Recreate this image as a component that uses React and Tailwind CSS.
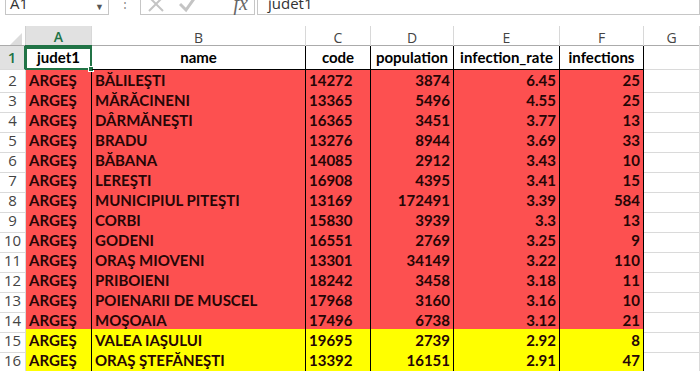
import React from 'react';

const COLS = ['A', 'B', 'C', 'D', 'E', 'F', 'G'];

const ROWS = [
  ['BĂLILEŞTI', '14272', '3874', '6.45', '25', 'red'],
  ['MĂRĂCINENI', '13365', '5496', '4.55', '25', 'red'],
  ['DÂRMĂNEŞTI', '16365', '3451', '3.77', '13', 'red'],
  ['BRADU', '13276', '8944', '3.69', '33', 'red'],
  ['BĂBANA', '14085', '2912', '3.43', '10', 'red'],
  ['LEREŞTI', '16908', '4395', '3.41', '15', 'red'],
  ['MUNICIPIUL PITEŞTI', '13169', '172491', '3.39', '584', 'red'],
  ['CORBI', '15830', '3939', '3.3', '13', 'red'],
  ['GODENI', '16551', '2769', '3.25', '9', 'red'],
  ['ORAŞ MIOVENI', '13301', '34149', '3.22', '110', 'red'],
  ['PRIBOIENI', '18242', '3458', '3.18', '11', 'red'],
  ['POIENARII DE MUSCEL', '17968', '3160', '3.16', '10', 'red'],
  ['MOŞOAIA', '17496', '6738', '3.12', '21', 'red'],
  ['VALEA IAŞULUI', '19695', '2739', '2.92', '8', 'yellow'],
  ['ORAŞ ŞTEFĂNEŞTI', '13392', '16151', '2.91', '47', 'yellow'],
];

const GRID = 'grid grid-cols-[26px_66px_214px_65px_83px_106px_84px_56px]';
const UI_FONT = { fontFamily: '"Open Sans", "Noto Sans", sans-serif' };
const CELL_FONT = { fontFamily: 'Lato, "Liberation Sans", sans-serif' };

function FormulaBar() {
  return (
    <div className="h-[26px] overflow-hidden">
      <div className="flex items-start h-[24px] -mt-[9px]" style={UI_FONT}>
        <div className="ml-[5px] w-[104px] h-[24px] border border-[#c6c6c6] flex items-center justify-between px-[4px] text-[15px] text-[#333]">
          <span>A1</span>
          <span className="text-[9px] text-[#555] mt-[8px]">▼</span>
        </div>
        <div className="w-[31px] h-[24px] flex items-center justify-center text-[#888] text-[12px]">⋮</div>
        <div className="w-[115px] h-[24px] border border-[#c6c6c6] flex items-center px-[6px] gap-[14px]">
          <svg width="18" height="18" viewBox="0 0 18 18" className="mt-[2px]">
            <path d="M2 2 L16 16 M16 2 L2 16" stroke="#c4c4c4" strokeWidth="2" fill="none" />
          </svg>
          <svg width="18" height="18" viewBox="0 0 18 18" className="mt-[2px]">
            <path d="M1 9 L7 15 L17 1" stroke="#c4c4c4" strokeWidth="3" fill="none" />
          </svg>
          <span className="ml-auto text-[20px] italic text-[#666]" style={{ fontFamily: '"Liberation Serif", serif' }}>fx</span>
        </div>
        <div className="flex-1 ml-[2px] h-[24px] border border-[#c6c6c6] flex items-center px-[10px] text-[15px] text-[#333]">
          judet1
        </div>
      </div>
    </div>
  );
}

function ColumnHeaders() {
  return (
    <div className={`${GRID} h-[20px] border-b border-[#ababab]`} style={UI_FONT}>
      <div className="relative border-r border-[#d0d0d0]">
        <div className="absolute right-[3px] bottom-[3px] w-0 h-0 border-l-[12px] border-l-transparent border-b-[12px] border-b-[#dcdcdc]" />
      </div>
      {COLS.map((c) => (
        <div
          key={c}
          className={`flex items-center justify-center text-[14px] border-r border-[#d8d8d8] ${
            c === 'A' ? 'bg-[#e1e1e1] text-[#217346] font-semibold border-b-2 border-b-[#217346] -mb-[1px]' : 'text-[#444]'
          }`}
        >
          {c}
        </div>
      ))}
    </div>
  );
}

function RowNum({ n, active }) {
  return (
    <div
      className={`flex items-center justify-center text-[15px] border-b border-[#dadada] ${
        active ? 'bg-[#e1e1e1] text-[#217346] font-semibold border-r-2 border-r-[#217346]' : 'text-[#444] border-r border-[#c8c8c8]'
      }`}
      style={UI_FONT}
    >
      {n}
    </div>
  );
}

export default function App() {
  const head = ['judet1', 'name', 'code', 'population', 'infection_rate', 'infections'];
  return (
    <div className="w-[700px] h-[371px] overflow-hidden bg-white">
      <FormulaBar />
      <ColumnHeaders />

      <div className={`${GRID} h-[23px]`} style={CELL_FONT}>
        <RowNum n={1} active />
        {head.map((h, i) => (
          <div
            key={h}
            className="relative flex items-center justify-center text-[15px] font-bold text-black border-r border-b border-black"
          >
            {h}
            {i === 0 && (
              <div className="absolute -left-[1px] -top-[1px] -right-[1px] -bottom-[1px] border-2 border-[#217346]">
                <div className="absolute -right-[4px] -bottom-[4px] w-[6px] h-[6px] bg-[#217346] border border-white" />
              </div>
            )}
          </div>
        ))}
        <div className="border-r border-b border-[#dadada]" />
      </div>

      {ROWS.map(([name, code, pop, rate, inf, color], i) => {
        const bg = color === 'red' ? 'bg-[#fd5050]' : 'bg-[#ffff00]';
        const cell = `${bg} flex items-center text-[15px] font-bold text-[#260606] border-r border-b border-black px-[3px] leading-none`;
        return (
          <div key={name} className={`${GRID} h-[20px]`} style={CELL_FONT}>
            <RowNum n={i + 2} />
            <div className={cell}>ARGEŞ</div>
            <div className={cell}>{name}</div>
            <div className={cell}>{code}</div>
            <div className={`${cell} justify-end`}>{pop}</div>
            <div className={`${cell} justify-end`}>{rate}</div>
            <div className={`${cell} justify-end`}>{inf}</div>
            <div className="border-r border-b border-[#dadada]" />
          </div>
        );
      })}
    </div>
  );
}
